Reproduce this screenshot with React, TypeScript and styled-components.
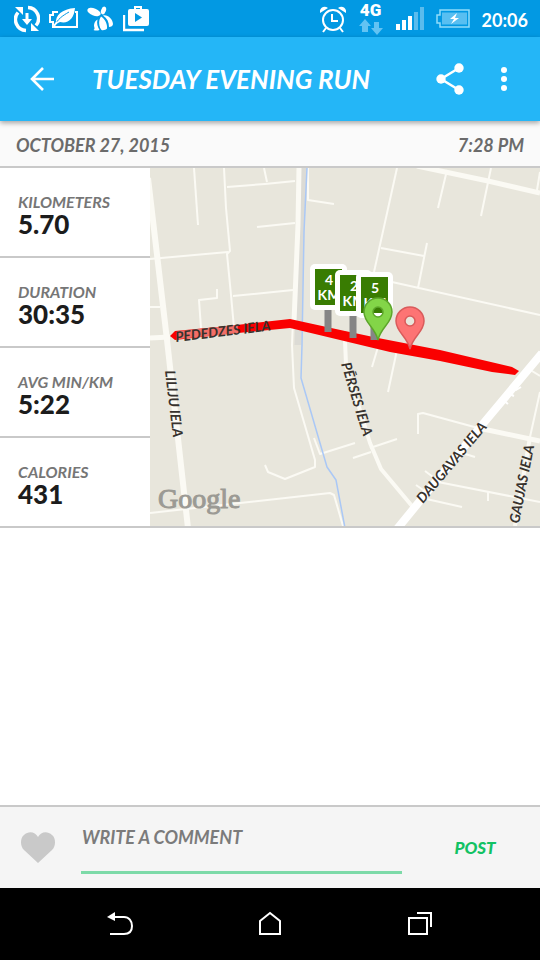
import React from 'react';
import styled, { createGlobalStyle } from 'styled-components';

const GlobalStyle = createGlobalStyle`
  *, *::before, *::after { box-sizing: border-box; }
  body {
    margin: 0;
    background: #fff;
    color: #1c1c1c;
    font-family: Lato, "Open Sans", sans-serif;
  }
  button, input { font: inherit; color: inherit; margin: 0; }
`;

const Screen = styled.div`
  min-height: 100vh;
  display: flex;
  flex-direction: column;
`;

const StatusBar = styled.div`
  height: 37px;
  padding: 0 12px 0 14px;
  display: flex;
  align-items: center;
  justify-content: space-between;
  background: #0299e3;
  color: #fff;
`;

const StatusGroup = styled.div<{ $gap: number }>`
  display: flex;
  align-items: center;
  gap: ${(p) => p.$gap}px;
  svg { display: block; }
`;

const Clock = styled.time`
  font-size: 18px;
  line-height: 24px;
  font-weight: 700;
  padding-top: 2px;
`;

const Network = styled.div`
  width: 26px;
  display: flex;
  flex-direction: column;
  align-items: center;
  font: 900 17px/17px Roboto, sans-serif;
`;

const AppBar = styled.header`
  height: 84px;
  padding: 0 9px 0 15px;
  display: flex;
  align-items: center;
  background: #24b6f7;
  color: #fff;
  position: relative;
  box-shadow: 0 2px 5px rgba(0, 0, 0, 0.35);
`;

const IconButton = styled.button`
  width: 54px;
  height: 54px;
  padding: 0;
  border: 0;
  background: none;
  display: flex;
  align-items: center;
  justify-content: center;
  cursor: pointer;
`;

const Title = styled.h1`
  flex: 1;
  margin: 0 0 0 23px;
  font-size: 26px;
  line-height: 32px;
  font-weight: 700;
  font-style: italic;
`;

const DateBar = styled.div`
  height: 47px;
  padding: 2px 16px 0;
  display: flex;
  align-items: center;
  justify-content: space-between;
  background: #fafafa;
  border-bottom: 2px solid #c9c9c9;
  color: #6b6b6b;
  font-size: 18px;
  line-height: 24px;
  font-weight: 700;
  font-style: italic;
`;

const Summary = styled.section`
  display: grid;
  grid-template-columns: 150px 1fr;
  border-bottom: 2px solid #c9c9c9;
`;

const Stats = styled.dl`
  margin: 0;
`;

const Stat = styled.div`
  height: 90px;
  padding: 22px 8px 0 18px;
  border-bottom: 2px solid #c9c9c9;
  &:last-child { height: 88px; border-bottom: 0; }
`;

const StatLabel = styled.dt`
  color: #767676;
  font-size: 16px;
  line-height: 24px;
  font-weight: 700;
  font-style: italic;
`;

const StatValue = styled.dd`
  margin: 0;
  font-size: 26px;
  line-height: 20px;
  font-weight: 900;
`;

const MapView = styled.svg`
  display: block;
  width: 100%;
  height: 358px;
  background: #e8e6dc;
`;

const StreetName = styled.text`
  font: italic 700 14px Lato, sans-serif;
  fill: #37322d;
`;

const SignText = styled.text`
  font: 700 14px Lato, sans-serif;
  fill: #fff;
  text-anchor: middle;
`;

const MapBrand = styled.text`
  font: 28px "Liberation Serif", serif;
  fill: #9b9a94;
  stroke: #9b9a94;
  stroke-width: 1px;
`;

const Comments = styled.main`
  flex: 1;
`;

const CommentForm = styled.form`
  height: 83px;
  padding: 0 16px 0 11px;
  display: flex;
  align-items: center;
  background: #f5f5f5;
  border-top: 2px solid #c9c9c9;
`;

const CommentInput = styled.input`
  flex: 1;
  min-width: 0;
  align-self: flex-start;
  height: 67px;
  margin-left: 16px;
  padding: 0 1px 4px;
  border: 0;
  border-bottom: 3px solid #7ddaa8;
  border-radius: 0;
  outline: 0;
  background: none;
  font-size: 18px;
  font-weight: 700;
  font-style: italic;
  &::placeholder { color: #7b7b7b; opacity: 1; }
`;

const PostButton = styled.button`
  width: 98px;
  height: 48px;
  margin-left: 24px;
  padding: 0;
  border: 0;
  background: none;
  color: #12c264;
  font-size: 17px;
  font-weight: 900;
  font-style: italic;
  cursor: pointer;
`;

const NavBar = styled.nav`
  height: 72px;
  display: flex;
  align-items: center;
  justify-content: center;
  gap: 96px;
  background: #000;
  color: #fff;
`;

const SyncIcon = () => (
  <svg width="26" height="28" viewBox="0 0 26 28" fill="none" stroke="currentColor" strokeWidth="3.500">
    <path d="M12 25.500A11 11 0 0 1 4 7.500" />
    <path d="M14 2.500A11 11 0 0 1 22 20.500" />
    <path d="M1 2h8v8zM25 26h-8v-8zM11.500 8h3v6h3.500l-5 6-5-6h3.500z" fill="currentColor" stroke="none" />
  </svg>
);

const LeafIcon = () => (
  <svg width="29" height="22" viewBox="0 0 29 22" fill="none">
    <path d="M9 4H4v3H1v7h3v5h24V4h-2" stroke="currentColor" strokeWidth="2" />
    <path d="M7 16C6 7 13 1 26 0c-1 11-7 16-15 14z" fill="currentColor" />
    <path d="M5 18C9 11 13 8 20 4" stroke="#0299e3" />
    <path d="M5 18l3-4" stroke="currentColor" strokeWidth="2" />
  </svg>
);

const BeeIcon = () => (
  <svg width="27" height="26" viewBox="0 0 27 26" fill="currentColor">
    <ellipse cx="7" cy="6" rx="7" ry="3.600" transform="rotate(22 7 6)" />
    <ellipse cx="16.500" cy="4.500" rx="2.400" ry="4" transform="rotate(20 16.500 4.500)" />
    <path d="M16 9.500C20 8 26 13 26 18C26 20 24 21 22 21C22 16 20 12 16 9.500z" />
    <path d="M14 10.500C18 13 20.500 18 20 22.500C19 24 16 24.500 14.500 24C12 21 11 15 14 10.500z" />
    <path d="M10.500 13.500C9.500 17 10.500 21 12.500 24C10 25 8 24.500 6.500 24C8 23 7.500 22 7 20C7 17 8 15 10.500 13.500z" />
  </svg>
);

const PlayBagIcon = () => (
  <svg width="26" height="27" viewBox="0 0 26 27">
    <path d="M1 10v15h20" fill="none" stroke="currentColor" strokeWidth="2.400" />
    <path d="M12 5V2h6v3" fill="none" stroke="currentColor" strokeWidth="2" />
    <rect x="5" y="4" width="21" height="17" rx="2" fill="currentColor" />
    <path d="M12 8v9l7-4.500z" fill="#0299e3" />
  </svg>
);

const AlarmIcon = () => (
  <svg width="26" height="28" viewBox="0 0 26 28" fill="none" stroke="currentColor" strokeWidth="2">
    <circle cx="13" cy="15" r="10" />
    <path d="M12 9v7h6" />
    <path d="M6 23l-3 4M20 23l3 4" />
    <path d="M0 8c-1-5 4-8 8-5zM26 8c1-5-4-8-8-5z" fill="currentColor" stroke="none" />
  </svg>
);

const DataArrows = () => (
  <svg width="24" height="16" viewBox="0 0 24 16" fill="#62c3f3">
    <path d="M6 0l6 7H9v6H3V7H0zM15 3h5v6h4l-6 7-6-7h3z" />
  </svg>
);

const SignalIcon = () => (
  <svg width="28" height="23" viewBox="0 0 28 23" fill="currentColor">
    <path d="M0 17h4v6H0zM6 13h4v10H6zM12 9h4v14h-4z" />
    <path d="M18 5h4v18h-4zM24 0h4v23h-4z" opacity=".35" />
  </svg>
);

const ChargingIcon = () => (
  <svg width="34" height="19" viewBox="0 0 34 19">
    <path d="M4 1h29v17H4v-4H1V6h3z" fill="none" stroke="#90dcfa" strokeWidth="1.500" />
    <path d="M6 3.500h25v12H6z" fill="#58bff1" />
    <path d="M21 4l-7 6h4l-3 5 8-6h-4z" fill="#fff" />
  </svg>
);

const BackArrow = () => (
  <svg width="26" height="26" viewBox="0 0 26 26" fill="none" stroke="currentColor" strokeWidth="2.600">
    <path d="M25 13H3M14 2L3 13l11 11" />
  </svg>
);

const ShareIcon = () => (
  <svg width="28" height="32" viewBox="0 0 28 32" fill="currentColor">
    <path d="M23 5L5 16l18 11" fill="none" stroke="currentColor" strokeWidth="2.500" />
    <circle cx="23" cy="5" r="4.700" />
    <circle cx="5" cy="16" r="4.700" />
    <circle cx="23" cy="27" r="4.700" />
  </svg>
);

const MoreIcon = () => (
  <svg width="8" height="26" viewBox="0 0 8 26" fill="currentColor">
    <circle cx="4" cy="4" r="3" />
    <circle cx="4" cy="13" r="3" />
    <circle cx="4" cy="22" r="3" />
  </svg>
);

const HeartIcon = () => (
  <svg width="34" height="31" viewBox="0 0 34 31" fill="#c9c9c9">
    <path d="M17 31L3 18C-1 14-1 6 3 3c4-4 11-4 14 2 3-6 10-6 14-2 4 3 4 11 0 15z" />
  </svg>
);

const NavBack = () => (
  <svg width="28" height="26" viewBox="0 0 28 26" fill="none" stroke="currentColor" strokeWidth="2">
    <path d="M6 6h12c5 0 8 4 8 9s-3 8-8 8H4" />
    <path d="M1 6l8-5v9z" fill="currentColor" stroke="none" />
  </svg>
);

const NavHome = () => (
  <svg width="24" height="26" viewBox="0 0 24 26" fill="none" stroke="currentColor" strokeWidth="2">
    <path d="M2 10l10-8 10 8v13H2z" />
  </svg>
);

const NavRecent = () => (
  <svg width="26" height="26" viewBox="0 0 26 26" fill="none" stroke="currentColor" strokeWidth="2">
    <path d="M2 7h18v16H2z" />
    <path d="M10 2h14v14" />
  </svg>
);

const minorRoads = [
  'M194 168L198 225',
  'M224 168L226 208L230 251L227 254L231 295L234 328',
  'M227 187L265 184L295 181M264 168L267 182',
  'M150 259L228 252M257 227L295 223M233 296L293 290',
  'M217 289V298L199 300L201 328M150 307H160',
  'M308 168V200L334 204',
  'M314 438L320 454L355 443M370 448L397 439M353 458L371 452',
  'M150 513L330 493L334 495L343 526',
  'M397 168L374 272M378 347L372 367M397 350L388 392',
  'M381 248L424 256M427 243L418 288M392 282L540 315',
  'M447 170L438 208M491 168L481 216M540 172L537 190',
  'M418 434V414L423 413L478 428M540 392L530 437M532 371L540 376',
  'M438 482L540 502M488 492V501M422 498L462 507M425 471L433 477M416 485L426 492M462 453L475 457',
];

const signs = [
  { km: 4, x: 315, y: 269 },
  { km: 2, x: 340, y: 275 },
  { km: 5, x: 361, y: 277 },
];

type PinProps = { x: number; y: number; fill: string; stroke: string };

const Pin = ({ x, y, fill, stroke }: PinProps) => (
  <path
    transform={`translate(${x} ${y})`}
    fill={fill}
    stroke={stroke}
    strokeWidth="1.500"
    fillRule="evenodd"
    d="M0 0C-3-13-14-17-14-28A14 14 0 0 1 14-28C14-17 3-13 0 0zM5-28A5 5 0 1 0-5-28A5 5 0 1 0 5-28z"
  />
);

const RouteMap = () => (
  <MapView viewBox="150 168 390 358" preserveAspectRatio="xMidYMid slice" role="img" aria-label="Route map">
    <g fill="none" strokeLinejoin="round">
      <path d="M303 168L301 230L298 345" stroke="#dcdbd5" strokeWidth="7" />
      <g stroke="#fbfaf4" strokeWidth="2">
        {minorRoads.map((d) => (
          <path key={d} d={d} />
        ))}
        <path d="M293 320L292 345L294 388L315 460V467L285 479L268 472L265 465" />
        <path d="M345 340L346 365L370 443L381 469L412 506M530 437L515 526" strokeWidth="4" />
        <path d="M417 166L488 181L540 193M483 429L540 441M150 338L170 337" strokeWidth="5" />
        <path d="M299 168L298 225L294 322" strokeWidth="5" />
        <path d="M148 178L167 340L188 528" strokeWidth="6" />
      </g>
      <path d="M542 353L482 425L397 529" stroke="#fff" strokeWidth="8" />
      <path d="M503 400l5 4M507 393l7 3M513 386l3 4l5-3" stroke="#fff" strokeWidth="2" />
      <path d="M307 168L304 232L302 345L301 378L327 467L336 480L345 528" stroke="#aac8f6" strokeWidth="1.500" />
    </g>
    <path
      fill="#fa0000"
      d="M170 336L175 331L228 326L290 319L345 331L378 338L440 350L512 367L519 371L515 375L492 372L440 361L390 352L340 340L290 328L228 334L175 340z"
    />
    <path d="M178 335L238 329" stroke="#f18a83" strokeWidth="8" opacity=".8" />
    <StreetName transform="translate(176 342) rotate(-7)">PEDEDZES IELA</StreetName>
    <StreetName transform="translate(165 371) rotate(83)">LILIJU IELA</StreetName>
    <StreetName transform="translate(341 364) rotate(73)">PĒRSES IELA</StreetName>
    <StreetName transform="translate(423 504) rotate(-50)">DAUGAVAS IELA</StreetName>
    <StreetName transform="translate(519 524) rotate(-79)">GAUJAS IELA</StreetName>
    {signs.map(({ km, x, y }) => (
      <g key={km}>
        <path d={`M${x + 13} ${y + 40}V${y + 63}`} stroke="#858585" strokeWidth="7" />
        <rect x={x - 5} y={y - 5} width="37" height="46" rx="5" fill="#fff" />
        <rect x={x} y={y} width="27" height="36" fill="#397c02" />
        <SignText x={x + 14} y={y + 16}>{km}</SignText>
        <SignText x={x + 14} y={y + 31}>KM</SignText>
      </g>
    ))}
    <Pin x={378} y={340} fill="#83d548" stroke="#5da52b" />
    <Pin x={410} y={349} fill="#fd7474" stroke="#d95b5b" />
    <MapBrand x="158" y="508">Google</MapBrand>
  </MapView>
);

const stats = [
  { label: 'KILOMETERS', value: '5.70' },
  { label: 'DURATION', value: '30:35' },
  { label: 'AVG MIN/KM', value: '5:22' },
  { label: 'CALORIES', value: '431' },
];

export default function App() {
  return (
    <Screen>
      <GlobalStyle />
      <StatusBar>
        <StatusGroup $gap={9}>
          <SyncIcon />
          <LeafIcon />
          <BeeIcon />
          <PlayBagIcon />
        </StatusGroup>
        <StatusGroup $gap={12}>
          <AlarmIcon />
          <Network>
            4G
            <DataArrows />
          </Network>
          <SignalIcon />
          <ChargingIcon />
          <Clock>20:06</Clock>
        </StatusGroup>
      </StatusBar>
      <AppBar>
        <IconButton aria-label="Back"><BackArrow /></IconButton>
        <Title>TUESDAY EVENING RUN</Title>
        <IconButton aria-label="Share"><ShareIcon /></IconButton>
        <IconButton aria-label="More options"><MoreIcon /></IconButton>
      </AppBar>
      <DateBar>
        <span>OCTOBER 27, 2015</span>
        <span>7:28 PM</span>
      </DateBar>
      <Summary>
        <Stats>
          {stats.map(({ label, value }) => (
            <Stat key={label}>
              <StatLabel>{label}</StatLabel>
              <StatValue>{value}</StatValue>
            </Stat>
          ))}
        </Stats>
        <RouteMap />
      </Summary>
      <Comments />
      <CommentForm onSubmit={(e) => e.preventDefault()}>
        <IconButton type="button" aria-label="Like"><HeartIcon /></IconButton>
        <CommentInput aria-label="Write a comment" placeholder="WRITE A COMMENT" />
        <PostButton type="submit">POST</PostButton>
      </CommentForm>
      <NavBar aria-label="System">
        <IconButton aria-label="Back"><NavBack /></IconButton>
        <IconButton aria-label="Home"><NavHome /></IconButton>
        <IconButton aria-label="Recent apps"><NavRecent /></IconButton>
      </NavBar>
    </Screen>
  );
}
